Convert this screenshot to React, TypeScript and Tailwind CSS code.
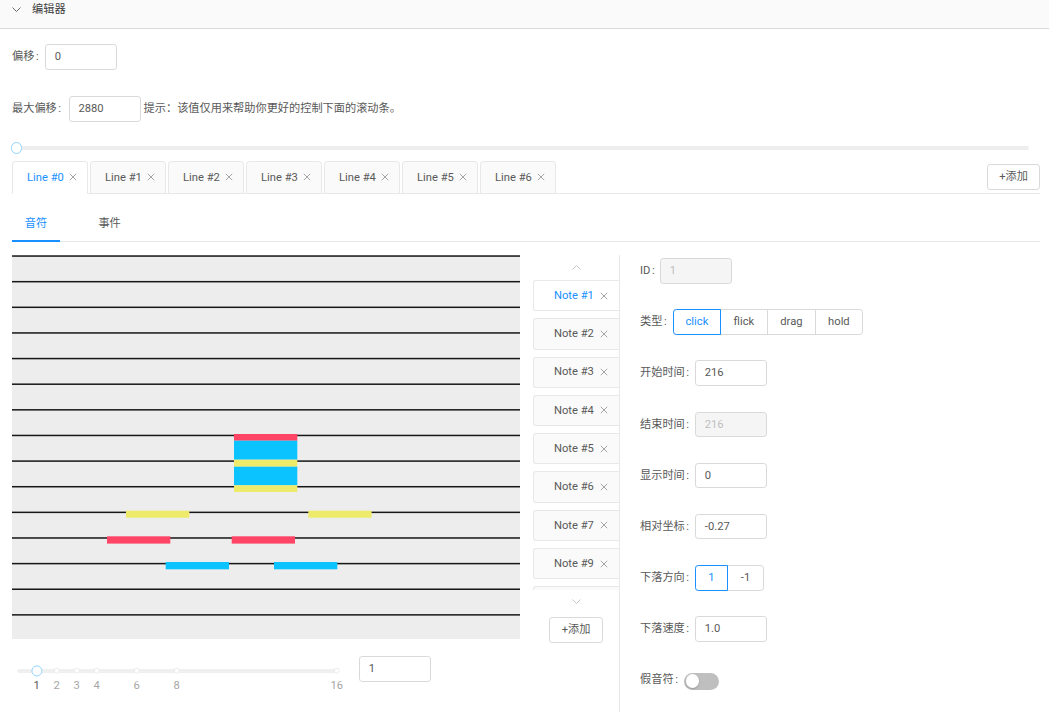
import React from "react";

function Colon() {
  return <span className="ml-[1.6px]">:</span>;
}

function Label({ children, w }: { children: React.ReactNode; w: string }) {
  return (
    <span className={`${w} shrink-0 whitespace-nowrap`}>
      {children}
      <Colon />
    </span>
  );
}

function Input({ value, w = "w-[72px]", disabled = false }: { value: string; w?: string; disabled?: boolean }) {
  return (
    <div
      className={`${w} h-[25.6px] shrink-0 flex items-center px-[8.8px] border-[0.8px] rounded-[3.2px] ${
        disabled ? "bg-[#f5f5f5] border-[#d9d9d9] text-[#bfbfbf]" : "bg-white border-[#d9d9d9] text-[#595959]"
      }`}
    >
      {value}
    </div>
  );
}

function CloseX({ className = "" }: { className?: string }) {
  return (
    <svg width="8" height="8" viewBox="0 0 8 8" className={className}>
      <path d="M0.8 0.8 L7.2 7.2 M7.2 0.8 L0.8 7.2" stroke="#9a9a9a" strokeWidth="0.9" fill="none" />
    </svg>
  );
}

function Chevron({ up = false, color = "#bfbfbf" }: { up?: boolean; color?: string }) {
  return (
    <svg width="9" height="5" viewBox="0 0 9 5">
      <path
        d={up ? "M0.5 4.5 L4.5 0.5 L8.5 4.5" : "M0.5 0.5 L4.5 4.5 L8.5 0.5"}
        stroke={color}
        strokeWidth="0.9"
        fill="none"
      />
    </svg>
  );
}

const lines = Array.from({ length: 15 }, (_, i) => i);

type N = { x: number; y: number; h: number; c: string };
const RED = "#ff4566";
const BLUE = "#0bc4ff";
const YEL = "#eeeb6a";
const notes: N[] = [
  { x: 222, y: 179, h: 6.7, c: RED },
  { x: 222, y: 185.7, h: 19, c: BLUE },
  { x: 222, y: 204.7, h: 7, c: YEL },
  { x: 222, y: 211.7, h: 18.6, c: BLUE },
  { x: 222, y: 230.3, h: 6.7, c: YEL },
  { x: 114, y: 255.7, h: 7, c: YEL },
  { x: 296.3, y: 255.7, h: 7, c: YEL },
  { x: 95, y: 281.3, h: 7.3, c: RED },
  { x: 219.7, y: 281.3, h: 7.3, c: RED },
  { x: 153.7, y: 307, h: 7.3, c: BLUE },
  { x: 262, y: 307, h: 7.3, c: BLUE },
];

function Canvas() {
  return (
    <svg width="508" height="384" viewBox="0 0 508 384" className="block">
      <rect width="508" height="384" fill="#ededed" />
      {lines.map((i) => (
        <rect key={i} x="0" y={i * 25.63 + 0.3} width="508" height="1.5" fill="#171717" />
      ))}
      {notes.map((n, i) => (
        <rect key={i} x={n.x} y={n.y} width="63.3" height={n.h} fill={n.c} />
      ))}
    </svg>
  );
}

const marks = [1, 2, 3, 4, 6, 8, 16];

function ScaleSlider() {
  const x = (v: number) => 4.7 + v * 20;
  return (
    <div className="relative w-[347px] h-[40px] shrink-0">
      <div className="absolute left-[4.7px] w-[320px] top-[13.4px] h-[3.2px] rounded-full bg-[#f0f0f0]" />
      {marks.map((m) => (
        <React.Fragment key={m}>
          <div
            className="absolute w-[6.4px] h-[6.4px] rounded-full bg-white border-[1.6px] border-[#ececec] -translate-x-1/2 -translate-y-1/2 top-[15px]"
            style={{ left: x(m) }}
          />
          <div
            className={`absolute top-[21.5px] -translate-x-1/2 leading-[17px] ${m === 1 ? "text-[#595959]" : "text-[#a6a6a6]"}`}
            style={{ left: x(m) }}
          >
            {m}
          </div>
        </React.Fragment>
      ))}
      <div
        className="absolute w-[11.2px] h-[11.2px] rounded-full bg-white border-[1.6px] border-[#91d5ff] -translate-x-1/2 -translate-y-1/2 top-[15px]"
        style={{ left: x(1) }}
      />
    </div>
  );
}

const noteItems = ["Note #1", "Note #2", "Note #3", "Note #4", "Note #5", "Note #6", "Note #7", "Note #9", ""];

function NoteList() {
  return (
    <div className="ml-[13px] w-[87px] h-[460px] shrink-0 border-r border-[#e8e8e8] flex flex-col">
      <div className="h-[25px] flex items-center justify-center pt-[1px]">
        <Chevron up />
      </div>
      <div className="h-[310px] overflow-hidden">
        <div className="flex flex-col gap-[7px]">
          {noteItems.map((n, i) => (
            <div
              key={i}
              className={`w-[86px] h-[31.3px] shrink-0 flex items-center pl-[20px] border-l border-t border-b border-[#e8e8e8] rounded-tl-[3px] rounded-bl-[3px] whitespace-nowrap ${
                i === 0 ? "bg-white text-[#1890ff]" : "bg-[#fafafa] text-[#595959]"
              }`}
            >
              {n && (
                <>
                  <span>{n}</span>
                  <CloseX className="ml-[6px]" />
                </>
              )}
            </div>
          ))}
        </div>
      </div>
      <div className="h-[23px] flex items-center justify-center">
        <Chevron />
      </div>
      <div className="mt-[4px] ml-[16px] w-[54px] h-[25.6px] flex items-center justify-center border-[0.8px] border-[#d9d9d9] rounded-[3.2px] text-[#595959]">
        +添加
      </div>
    </div>
  );
}

function Form() {
  const seg = "h-[25.6px] flex items-center justify-center border-[0.8px]";
  return (
    <div className="ml-[20px] pt-[3px] flex flex-col gap-[25.6px]">
      <div className="h-[25.6px] flex items-center">
        <Label w="w-[20px]">ID</Label>
        <Input value="1" disabled />
      </div>
      <div className="h-[25.6px] flex items-center">
        <Label w="w-[33px]">类型</Label>
        <div className="flex">
          <div className={`${seg} w-[47.8px] border-[#1890ff] text-[#1890ff] rounded-l-[3.2px] relative z-10`}>click</div>
          <div className={`${seg} w-[47.8px] -ml-[0.8px] border-[#d9d9d9] text-[#595959]`}>flick</div>
          <div className={`${seg} w-[48.8px] -ml-[0.8px] border-[#d9d9d9] text-[#595959]`}>drag</div>
          <div className={`${seg} w-[47.8px] -ml-[0.8px] border-[#d9d9d9] text-[#595959] rounded-r-[3.2px]`}>hold</div>
        </div>
      </div>
      <div className="h-[25.6px] flex items-center">
        <Label w="w-[55px]">开始时间</Label>
        <Input value="216" />
      </div>
      <div className="h-[25.6px] flex items-center">
        <Label w="w-[55px]">结束时间</Label>
        <Input value="216" disabled />
      </div>
      <div className="h-[25.6px] flex items-center">
        <Label w="w-[55px]">显示时间</Label>
        <Input value="0" />
      </div>
      <div className="h-[25.6px] flex items-center">
        <Label w="w-[55px]">相对坐标</Label>
        <Input value="-0.27" />
      </div>
      <div className="h-[25.6px] flex items-center">
        <Label w="w-[55px]">下落方向</Label>
        <div className="flex">
          <div className={`${seg} w-[33px] border-[#1890ff] text-[#1890ff] rounded-l-[3.2px] relative z-10`}>1</div>
          <div className={`${seg} w-[36.6px] -ml-[0.8px] border-[#d9d9d9] text-[#595959] rounded-r-[3.2px]`}>-1</div>
        </div>
      </div>
      <div className="h-[25.6px] flex items-center">
        <Label w="w-[55px]">下落速度</Label>
        <Input value="1.0" />
      </div>
      <div className="h-[25.6px] flex items-center">
        <Label w="w-[44px]">假音符</Label>
        <div className="w-[35.2px] h-[16.8px] rounded-full bg-[#bfbfbf] flex items-center pl-[1.6px] mt-[2px]">
          <div className="w-[13.6px] h-[13.6px] rounded-full bg-white shadow-[0_1px_2px_rgba(0,35,11,0.25)]" />
        </div>
      </div>
    </div>
  );
}

export default function App() {
  const lineTabs = ["Line #0", "Line #1", "Line #2", "Line #3", "Line #4", "Line #5", "Line #6"];
  return (
    <div className="w-[1049px] h-[712px] overflow-hidden bg-white text-[11.2px] leading-[17.6px] text-[#595959] font-['Roboto','Noto_Sans_CJK_SC',sans-serif]">
      {/* collapse header */}
      <div className="h-[29px] bg-[#fafafa] border-b border-[#d9d9d9] flex items-start pl-[12px] pt-[1px]">
        <div className="h-[17.6px] flex items-center">
          <Chevron color="#595959" />
        </div>
        <span className="ml-[11px] text-[#404040]">编辑器</span>
      </div>

      <div className="pl-[12px] pr-[9px]">
        {/* offset */}
        <div className="mt-[15px] h-[25.6px] flex items-center">
          <Label w="w-[33px]">偏移</Label>
          <Input value="0" />
        </div>
        {/* max offset */}
        <div className="mt-[26.4px] h-[25.6px] flex items-center">
          <Label w="w-[56.6px]">最大偏移</Label>
          <Input value="2880" />
          <span className="ml-[3px] whitespace-nowrap">提示：该值仅用来帮助你更好的控制下面的滚动条。</span>
        </div>
        {/* scroll slider */}
        <div className="mt-[20.4px] h-[12px] w-[1017px] relative flex items-center">
          <div className="w-full h-[3.2px] rounded-full bg-[#eeeeee]" />
          <div className="absolute left-[-0.8px] top-[0.4px] w-[11.2px] h-[11.2px] rounded-full bg-white border-[1.6px] border-[#91d5ff]" />
        </div>

        {/* line tabs */}
        <div className="mt-[7px] h-[33px] border-b border-[#e8e8e8] flex items-start justify-between">
          <div className="flex gap-[2px]">
            {lineTabs.map((t, i) => (
              <div
                key={t}
                className={`w-[76px] h-[33px] flex items-center pl-[14px] border-[0.8px] rounded-t-[3.2px] whitespace-nowrap ${
                  i === 0
                    ? "bg-white border-[#e8e8e8] border-b-white text-[#1890ff]"
                    : "bg-[#fafafa] border-[#e8e8e8] text-[#595959]"
                }`}
              >
                <span>{t}</span>
                <CloseX className="ml-[5px]" />
              </div>
            ))}
          </div>
          <div className="mt-[3px] w-[53px] h-[25.6px] flex items-center justify-center border-[0.8px] border-[#d9d9d9] rounded-[3.2px] text-[#595959]">
            +添加
          </div>
        </div>

        {/* sub tabs */}
        <div className="mt-[12.8px] h-[35.2px] border-b border-[#e8e8e8] flex">
          <div className="relative w-[48px] flex items-center justify-center text-[#1890ff]">
            音符
            <div className="absolute left-0 right-0 bottom-[-1px] h-[2px] bg-[#1890ff]" />
          </div>
          <div className="ml-[25.6px] w-[48px] flex items-center justify-center text-[#595959]">事件</div>
        </div>

        {/* main */}
        <div className="mt-[13px] flex items-start">
          <div className="w-[508px] shrink-0">
            <Canvas />
            <div className="mt-[17px] flex items-start">
              <ScaleSlider />
              <Input value="1" />
            </div>
          </div>
          <NoteList />
          <Form />
        </div>
      </div>
    </div>
  );
}
